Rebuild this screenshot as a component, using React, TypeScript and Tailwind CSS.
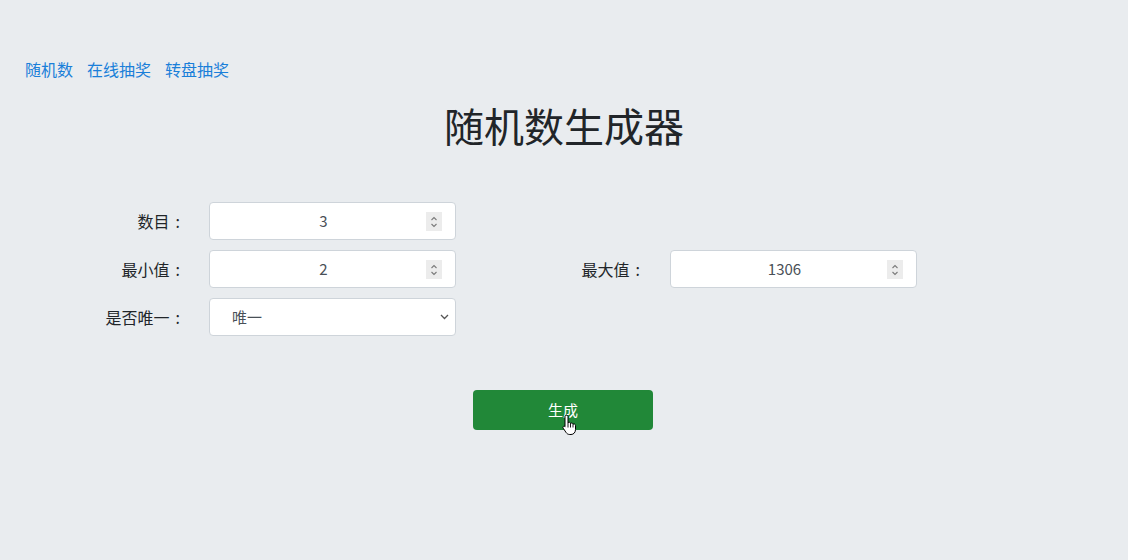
import React from "react";

const font = { fontFamily: '"Noto Sans CJK SC", "Noto Sans", sans-serif' };

function Spinner() {
  return (
    <span className="absolute right-[13px] top-[9px] flex h-[19px] w-[16px] items-center justify-center bg-[#ececec]">
      <svg width="10" height="14" viewBox="0 0 10 14" fill="none" stroke="#7a7a7a" strokeWidth="1.1">
        <path d="M2.5 5 L5 2.5 L7.5 5" />
        <path d="M2.5 9 L5 11.5 L7.5 9" />
      </svg>
    </span>
  );
}

function NumInput({ value }: { value: string }) {
  return (
    <div className="relative h-[38px] w-[247px] rounded-[4px] border border-[#ced4da] bg-white">
      <div className="flex h-full items-center justify-center pr-[18px] text-[15px] text-[#495057]">{value}</div>
      <Spinner />
    </div>
  );
}

function Label({ text, wide }: { text: string; wide?: boolean }) {
  return (
    <div className={`${wide ? "w-[186px]" : "w-[182px]"} text-right text-[16px] text-[#212529]`}>
      {text}
      <span className="ml-[6px] mr-[2px]">:</span>
    </div>
  );
}

export default function App() {
  return (
    <div className="min-h-[560px] w-full bg-[#e9ecef]" style={font}>
      <div className="pt-[57px]">
        <div className="flex gap-[14px] pl-[25px] text-[16px] leading-[24px] text-[#1a7fd9]">
          <a>随机数</a>
          <a>在线抽奖</a>
          <a>转盘抽奖</a>
        </div>
        <h1 className="mt-[20px] text-center text-[40px] leading-[48px] text-[#212529]">随机数生成器</h1>
        <div className="mt-[53px] flex flex-col gap-[10px]">
          <div className="flex items-center">
            <Label text="数目" />
            <div className="ml-[27px]"><NumInput value="3" /></div>
          </div>
          <div className="flex items-center">
            <Label text="最小值" />
            <div className="ml-[27px]"><NumInput value="2" /></div>
            <Label text="最大值" wide />
            <div className="ml-[28px]"><NumInput value="1306" /></div>
          </div>
          <div className="flex items-center">
            <Label text="是否唯一" />
            <div className="relative ml-[27px] flex h-[38px] w-[247px] items-center rounded-[4px] border border-[#ced4da] bg-white pl-[22px] text-[15px] text-[#495057]">
              唯一
              <svg className="absolute right-[6px] top-[15px]" width="9" height="6" viewBox="0 0 9 6" fill="none" stroke="#555" strokeWidth="1.3">
                <path d="M1 1 L4.5 4.5 L8 1" />
              </svg>
            </div>
          </div>
        </div>
        <div className="mt-[54px] flex justify-center">
          <div className="relative ml-[-2px] flex h-[40px] w-[180px] items-center justify-center rounded-[4px] bg-[#218838] text-[15px] text-white">
            生成
            <svg className="absolute left-[89px] top-[24px]" width="16" height="22" viewBox="0 0 16 22">
              <path
                d="M4.5 1.2 C5.4 1.2 6 1.8 6 2.7 L6 9 C6.3 8.4 7 8.1 7.6 8.3 C8.2 8.5 8.5 9 8.5 9.6 C8.8 9.1 9.5 8.9 10.1 9.1 C10.7 9.3 11 9.9 11 10.4 C11.3 10 11.9 9.8 12.5 10 C13.2 10.3 13.5 10.9 13.5 11.6 L13.5 15.5 C13.5 18.3 11.7 20.5 9 20.5 L7.8 20.5 C6 20.5 4.9 19.7 4 18.4 L1.2 14.2 C0.8 13.6 0.9 12.8 1.5 12.4 C2.1 12 2.8 12.2 3.2 12.7 L3 12.5 L3 2.7 C3 1.8 3.6 1.2 4.5 1.2 Z"
                fill="#fff"
                stroke="#000"
                strokeWidth="1"
              />
              <path d="M8.5 9.6 L8.5 13.5 M11 10.4 L11 13.5 M6 9 L6 13.5" stroke="#000" strokeWidth="0.9" />
            </svg>
          </div>
        </div>
      </div>
    </div>
  );
}
